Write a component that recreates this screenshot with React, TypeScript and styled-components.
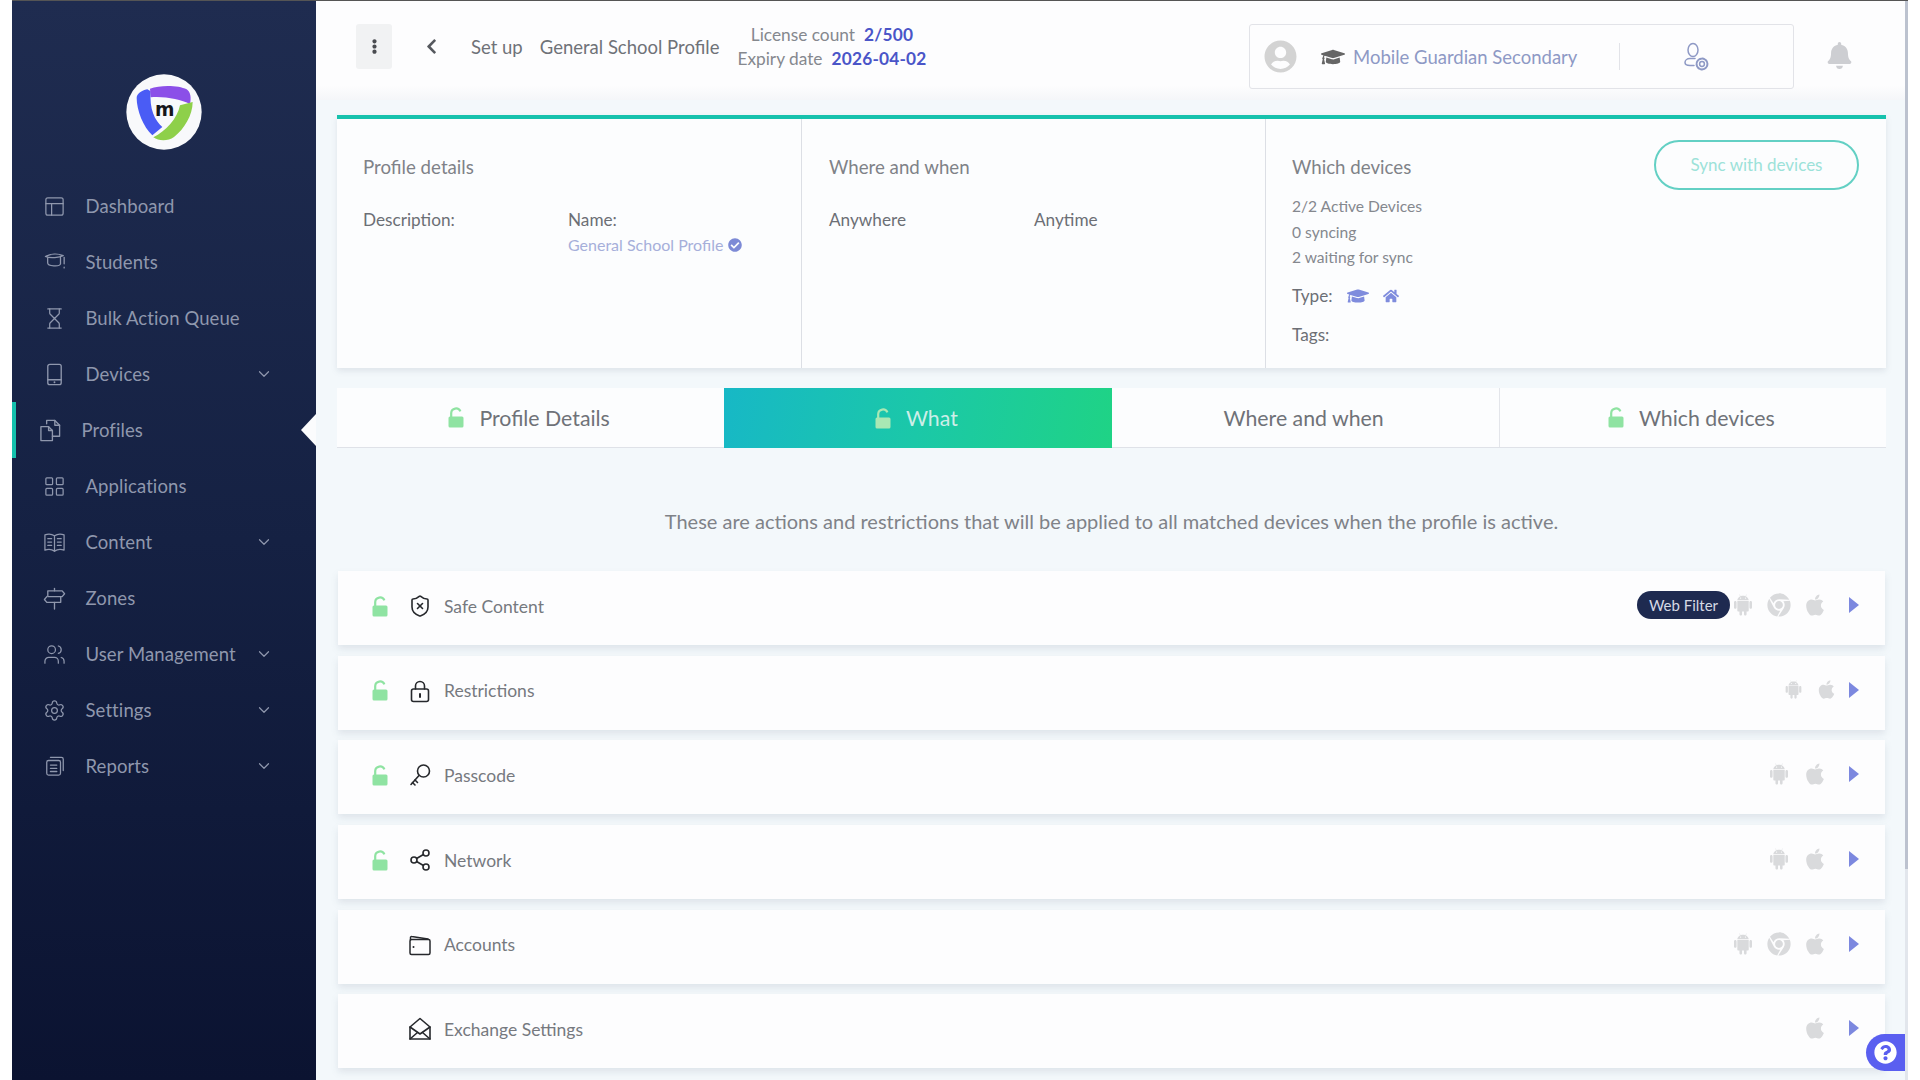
import * as React from "react";
import styled, { createGlobalStyle } from "styled-components";
import {
    ChevronDown,
    Hourglass,
    LayoutGrid,
    PanelsTopLeft,
    Settings,
    Share2,
    ShieldX,
    Users,
} from "lucide-react";
import { AiFillAndroid } from "react-icons/ai";
import {
    FaApple,
    FaBell,
    FaCheckCircle,
    FaChevronLeft,
    FaChrome,
    FaEllipsisV,
    FaGraduationCap,
    FaHome,
    FaQuestionCircle,
    FaUserCircle,
} from "react-icons/fa";

const FONT = `Lato, "Open Sans", sans-serif`;

const GlobalStyle = createGlobalStyle`
    html, body {
        margin: 0;
        height: 100%;
        background: #ffffff;
    }
    body {
        font-family: ${FONT};
        overflow: hidden;
    }
`;

const Frame = styled.div`
    display: flex;
    height: 1079px;
    margin: 0 12px;
    border-top: 1px solid #555555;
    overflow: hidden;
`;

const Sidebar = styled.nav`
    flex: 0 0 304px;
    display: flex;
    flex-direction: column;
    padding-top: 73px;
    background: linear-gradient(180deg, #1f2c50 0%, #152143 50%, #0b1331 100%);
`;

const LogoWrap = styled.div`
    display: flex;
    justify-content: center;
    height: 76px;
    margin-bottom: 28px;
`;

const NavItem = styled.div<{ $active?: boolean }>`
    position: relative;
    display: flex;
    align-items: center;
    height: 56px;
    padding-left: ${props => (props.$active ? "23px" : "31px")};
    padding-right: 43px;
    border-left: ${props => (props.$active ? "4px solid #14c1ad" : "0")};
    color: #8f97ad;
    font-size: 18.5px;
    font-weight: 400;
    letter-spacing: 0.1px;
`;

const NavIcon = styled.span`
    flex: 0 0 23px;
    display: flex;
    justify-content: center;
    margin-right: 19.5px;
`;

const NavChevron = styled.span`
    display: flex;
    margin-left: auto;
`;

const Notch = styled.span`
    position: absolute;
    right: 0;
    top: 12px;
    border-top: 16px solid transparent;
    border-bottom: 16px solid transparent;
    border-right: 15px solid #fbfcfd;
`;

const Main = styled.main`
    position: relative;
    flex: 1;
    min-width: 0;
    background: #f3f8fb;
    overflow: hidden;
`;

const ScrollThumb = styled.div`
    position: absolute;
    right: 0;
    top: 0;
    width: 3px;
    height: 868px;
    background: #bcc2cf;
`;

const ScrollTrack = styled.div`
    position: absolute;
    right: 0;
    top: 868px;
    bottom: 0;
    width: 3px;
    background: #e2e6ec;
`;

const Header = styled.header`
    display: flex;
    align-items: center;
    height: 99px;
    padding: 0 55px 8px 40px;
    box-sizing: border-box;
    background: linear-gradient(180deg, #fdfdfe 85%, #f5f6f9 100%);
    color: #6f7278;
    font-size: 18.5px;
`;

const KebabButton = styled.div`
    display: flex;
    align-items: center;
    justify-content: center;
    width: 36px;
    height: 45px;
    margin-right: 31px;
    border-radius: 3px;
    background: #f1f2f3;
    color: #4a4c50;
`;

const BackButton = styled.div`
    display: flex;
    width: 18px;
    margin-right: 30px;
    color: #55585e;
`;

const Crumb = styled.span<{ $gap: number }>`
    margin-right: ${props => props.$gap}px;
    white-space: nowrap;
`;

const LicenseBlock = styled.div`
    text-align: center;
    font-size: 17.3px;
    line-height: 24px;
    color: #85888e;
    white-space: nowrap;
`;

const LicenseValue = styled.b`
    margin-left: 9px;
    color: #4a55c8;
    font-weight: 700;
    letter-spacing: 0.2px;
`;

const OrgBox = styled.div`
    display: flex;
    align-items: center;
    width: 545px;
    height: 65px;
    margin-left: auto;
    margin-top: 20px;
    padding-left: 14px;
    box-sizing: border-box;
    border: 1px solid #e2e3e8;
    border-radius: 3px;
    color: #8e99c5;
    font-size: 18.5px;
`;

const OrgCap = styled.span`
    display: flex;
    margin-left: 24px;
    color: #666666;
`;

const OrgName = styled.span`
    margin-left: 8px;
    white-space: nowrap;
`;

const OrgDivider = styled.span`
    width: 1px;
    height: 27px;
    margin-left: 42px;
    background: #e2e3e8;
`;

const OrgGear = styled.span`
    display: flex;
    margin-left: 64px;
`;

const BellWrap = styled.div`
    display: flex;
    margin-left: 32px;
    margin-top: 17px;
    color: #cdced2;
`;

const Content = styled.div`
    padding: 15px 22px 0 21px;
`;

const SummaryCard = styled.section`
    display: grid;
    grid-template-columns: 464px 464px 1fr;
    height: 253px;
    box-sizing: border-box;
    border-top: 4px solid #16c2ad;
    background: #fcfdfe;
    box-shadow: 0 3px 6px rgba(120, 130, 150, 0.16);
`;

const SummaryColumn = styled.div<{ $inset: number; $divider?: boolean }>`
    padding: 36px 27px 0 ${props => props.$inset}px;
    border-left: ${props => (props.$divider ? "1px solid #dcdfe5" : "0")};
    font-size: 17.2px;
    line-height: 24px;
    color: #6c6f75;
`;

const SummaryHead = styled.div`
    display: flex;
    justify-content: space-between;
    align-items: flex-start;
    height: 24px;
    color: #7f8288;
    font-size: 18.7px;
`;

const DetailRow = styled.div`
    display: grid;
    grid-template-columns: 205px 1fr;
    margin-top: 29px;
`;

const ProfileName = styled.div`
    display: flex;
    align-items: center;
    gap: 5px;
    margin-top: 1px;
    color: #a6afda;
    font-size: 16px;
    svg {
        color: #7d8ad6;
    }
`;

const SyncButton = styled.div`
    display: flex;
    align-items: center;
    justify-content: center;
    width: 205px;
    height: 50px;
    margin-top: -15px;
    box-sizing: border-box;
    border: 2px solid #63d0c4;
    border-radius: 25px;
    color: #9ce2d9;
    font-size: 17px;
`;

const DeviceStats = styled.div`
    margin-top: 15px;
    color: #85888e;
    font-size: 15.6px;
    line-height: 25.5px;
`;

const MetaRow = styled.div<{ $gap: number }>`
    display: flex;
    align-items: center;
    margin-top: ${props => props.$gap}px;
    gap: 14px;
    svg {
        color: #7f8cdd;
    }
`;

const Tabs = styled.div`
    display: grid;
    grid-template-columns: repeat(4, 1fr);
    height: 60px;
    margin-top: 20px;
    background: #fcfdfe;
    border-bottom: 1px solid #dfe2e8;
    box-sizing: border-box;
`;

const Tab = styled.div<{ $active?: boolean; $divider?: boolean }>`
    display: flex;
    align-items: center;
    justify-content: center;
    gap: 15px;
    padding-right: 3px;
    border-left: ${props => (props.$divider ? "1px solid #e3e5ea" : "0")};
    background: ${props =>
        props.$active
            ? "linear-gradient(100deg, #17b8c6 0%, #1bc8a8 50%, #1fd385 100%)"
            : "transparent"};
    color: ${props => (props.$active ? "#cdeee8" : "#6f7278")};
    font-size: 21.3px;
    margin-bottom: ${props => (props.$active ? "-1px" : "0")};
`;

const Intro = styled.p`
    margin: 0;
    padding: 59px 0 36px;
    text-align: center;
    color: #7f8288;
    font-size: 20px;
    line-height: 28px;
`;

const RowList = styled.div`
    display: flex;
    flex-direction: column;
    gap: 10.7px;
    margin: 0 1px;
`;

const Row = styled.div`
    display: flex;
    align-items: center;
    flex: 0 0 74px;
    box-sizing: border-box;
    height: 74px;
    padding: 0 26px 4px 34px;
    background: #fdfdfe;
    box-shadow: 0 4px 7px rgba(120, 130, 150, 0.16);
    color: #76797f;
    font-size: 17.5px;
`;

const LockSlot = styled.span`
    flex: 0 0 16px;
    display: flex;
    justify-content: center;
`;

const RowIcon = styled.span`
    flex: 0 0 24px;
    display: flex;
    justify-content: center;
    margin: 0 12px 0 20px;
    color: #26282c;
`;

const Platforms = styled.div`
    display: flex;
    align-items: center;
    gap: 12px;
    margin-left: auto;
    margin-bottom: 2px;
    color: #d9dadc;
    svg {
        display: block;
    }
`;

const WebFilter = styled.span`
    display: flex;
    align-items: center;
    justify-content: center;
    width: 93px;
    height: 28px;
    margin-right: -11px;
    border-radius: 14px;
    background: #1e2a50;
    color: #d5d9e5;
    font-size: 15px;
`;

const Caret = styled.span<{ $compact?: boolean }>`
    width: 0;
    height: 0;
    margin-left: ${props => (props.$compact ? "0" : "10px")};
    border-top: 8px solid transparent;
    border-bottom: 8px solid transparent;
    border-left: 10px solid #7c88df;
`;

const HelpTab = styled.div`
    position: absolute;
    right: 3px;
    top: 1033px;
    display: flex;
    align-items: center;
    justify-content: center;
    width: 39px;
    height: 37px;
    box-sizing: border-box;
    border-radius: 19px 0 0 19px;
    background: #5a5ff0;
    color: #ffffff;
`;

const Logo = () => (
    <svg width="76" height="76" viewBox="6 6 228 228">
        <circle cx="120" cy="120" r="113" fill="#f8f9fb" />
        <path d="M70 52 C52 56 38 66 38 78 C38 115 58 165 85 190 L115 165 C92 145 76 112 80 58 Z" fill="#4a5cf5" />
        <path d="M78 50 C110 38 165 40 188 52 C200 60 202 78 198 96 C170 82 120 72 80 76 Z" fill="#8b4fe8" />
        <path d="M168 100 L206 90 C206 130 180 172 150 195 C132 208 105 208 88 196 C125 178 160 140 168 100 Z" fill="#8ed04a" />
        <text x="122" y="131" textAnchor="middle" fontFamily="'DejaVu Sans', sans-serif" fontWeight="700" fontSize="56" fill="#16161a">
            m
        </text>
    </svg>
);

const GreenLock = ({ light }: { light?: boolean }) => (
    <svg width="16" height="21" viewBox="0 0 16 21">
        <path d="M3.2 10 V6 a4.8 4.8 0 0 1 9.2 -1.6" fill="none" stroke={light ? "#a9e8b4" : "#8fe3a2"} strokeWidth="2.2" />
        <rect x="0.5" y="9.5" width="15" height="11" rx="1.5" fill={light ? "#a9e8b4" : "#8fe3a2"} />
    </svg>
);

const iconProps = {
    fill: "none",
    stroke: "currentColor",
    strokeLinecap: "round" as const,
    strokeLinejoin: "round" as const,
};

const CapOutline = () => (
    <svg width="22" height="22" viewBox="0 0 24 24" strokeWidth="1.4" {...iconProps}>
        <path d="M1.5 6 C7 3 15 2.5 21 5 C17 7 7 8.5 1.5 6 Z" />
        <path d="M4 7.5 V13 C4 16.5 17 17.5 18 14 V7" />
        <path d="M22 7 V14" />
        <path d="M22 17.5 v1" />
    </svg>
);

const TabletIcon = () => (
    <svg width="23" height="23" viewBox="0 0 24 24" strokeWidth="1.4" {...iconProps}>
        <rect x="5" y="1.5" width="14" height="21" rx="2" />
        <path d="M5 17.5 H19" />
        <path d="M12 20 v0.1" strokeWidth="2" />
    </svg>
);

const ProfilesIcon = () => (
    <svg width="23" height="23" viewBox="0 0 24 24" strokeWidth="1.4" {...iconProps}>
        <path d="M2 8 H10 L14 12 V22.5 H2 Z" />
        <path d="M10 8 V12 H14" />
        <path d="M8 5 V1.5 H16.5 L21.5 6.5 V18 H14" />
        <path d="M16.5 1.5 V6.5 H21.5" />
    </svg>
);

const BookIcon = () => (
    <svg width="23" height="23" viewBox="0 0 24 24" strokeWidth="1.3" {...iconProps}>
        <path d="M12 5 C9 3 5 3 2 4 V20 C5 19 9 19 12 21 C15 19 19 19 22 20 V4 C19 3 15 3 12 5 Z" />
        <path d="M12 5 V21" />
        <path d="M5 8 H9 M5 11.5 H9 M5 15 H9 M15 8 H19 M15 11.5 H19 M15 15 H19" />
    </svg>
);

const ZonesIcon = () => (
    <svg width="23" height="23" viewBox="0 0 24 24" strokeWidth="1.4" {...iconProps}>
        <path d="M12 1.5 V4" />
        <path d="M5 4 H20 L22.5 7 L20 10 H5 Z" />
        <path d="M18.5 10 V16 H4 L1.5 13 L4 10" />
        <path d="M12 16 V23" />
    </svg>
);

const ReportIcon = () => (
    <svg width="22" height="22" viewBox="0 0 24 24" strokeWidth="1.4" {...iconProps}>
        <rect x="3" y="6" width="15" height="16" rx="2" />
        <path d="M7 2.5 H19 a2 2 0 0 1 2 2 V17" />
        <path d="M7 11 H14 M7 14.5 H14 M7 18 H14" />
    </svg>
);

const PadlockIcon = () => (
    <svg width="24" height="24" viewBox="0 0 24 24" strokeWidth="1.6" {...iconProps}>
        <rect x="3.5" y="10" width="17" height="12.5" rx="2" />
        <path d="M7.5 10 V7 a4.5 4.5 0 0 1 9 0 V10" />
        <path d="M12 15 v3" strokeWidth="2" />
    </svg>
);

const KeyIcon = () => (
    <svg width="24" height="24" viewBox="0 0 24 24" strokeWidth="1.6" {...iconProps}>
        <circle cx="15.5" cy="8" r="6" />
        <path d="M11 12.5 L3 21.5" />
        <path d="M7 17 L9.5 19.5 M4.5 19.5 L7 22" />
    </svg>
);

const WalletIcon = () => (
    <svg width="24" height="24" viewBox="0 0 24 24" strokeWidth="1.5" {...iconProps}>
        <rect x="2" y="6.5" width="20" height="15" rx="1.5" />
        <path d="M2.5 7 V4.5 a1 1 0 0 1 1.2 -1 L20 6" />
        <path d="M5.5 14 v0.1" strokeWidth="2" />
    </svg>
);

const ExchangeIcon = () => (
    <svg width="24" height="24" viewBox="0 0 24 24" strokeWidth="1.6" {...iconProps}>
        <path d="M2 10 L12 1.5 L22 10 V22 H2 Z" />
        <path d="M2 10 L12 17 L22 10" />
        <path d="M2 22 L9.5 15.5 M22 22 L14.5 15.5" />
    </svg>
);

const UserGearIcon = () => (
    <svg width="26" height="30" viewBox="0 0 26 30" strokeWidth="1.5" {...iconProps}>
        <ellipse cx="9" cy="8" rx="5" ry="6.5" />
        <path d="M11 16.5 H6 C3 16.5 1 18.5 1 20.5 C1 22.5 3 23.5 6 23.5 H10" />
        <circle cx="18" cy="22" r="2.4" />
        <circle cx="18" cy="22" r="5.4" strokeDasharray="2.4 1.2" strokeWidth="2" />
    </svg>
);

const sideIcon = { size: 23, strokeWidth: 1.3 };

const NAV_ITEMS = [
    { label: "Dashboard", icon: <PanelsTopLeft {...sideIcon} /> },
    { label: "Students", icon: <CapOutline /> },
    { label: "Bulk Action Queue", icon: <Hourglass {...sideIcon} /> },
    { label: "Devices", icon: <TabletIcon />, sub: true },
    { label: "Profiles", icon: <ProfilesIcon />, active: true },
    { label: "Applications", icon: <LayoutGrid {...sideIcon} /> },
    { label: "Content", icon: <BookIcon />, sub: true },
    { label: "Zones", icon: <ZonesIcon /> },
    { label: "User Management", icon: <Users {...sideIcon} />, sub: true },
    { label: "Settings", icon: <Settings {...sideIcon} />, sub: true },
    { label: "Reports", icon: <ReportIcon />, sub: true },
];

const ROWS = [
    { label: "Safe Content", icon: <ShieldX size={24} strokeWidth={1.6} />, locked: true, pill: true, android: 24, chrome: true, apple: 24 },
    { label: "Restrictions", icon: <PadlockIcon />, locked: true, android: 21, apple: 21, compact: true },
    { label: "Passcode", icon: <KeyIcon />, locked: true, android: 24, apple: 24 },
    { label: "Network", icon: <Share2 size={24} strokeWidth={1.6} />, locked: true, android: 24, apple: 24 },
    { label: "Accounts", icon: <WalletIcon />, android: 24, chrome: true, apple: 24 },
    { label: "Exchange Settings", icon: <ExchangeIcon />, apple: 24 },
];

export default function App() {
    return (
        <>
            <GlobalStyle />
            <Frame>
                <Sidebar>
                    <LogoWrap>
                        <Logo />
                    </LogoWrap>
                    {NAV_ITEMS.map(item => (
                        <NavItem key={item.label} $active={item.active}>
                            <NavIcon>{item.icon}</NavIcon>
                            {item.label}
                            {item.sub && (
                                <NavChevron>
                                    <ChevronDown size={18} strokeWidth={1.6} />
                                </NavChevron>
                            )}
                            {item.active && <Notch />}
                        </NavItem>
                    ))}
                </Sidebar>
                <Main>
                    <Header>
                        <KebabButton>
                            <FaEllipsisV size={15} />
                        </KebabButton>
                        <BackButton>
                            <FaChevronLeft size={17} />
                        </BackButton>
                        <Crumb $gap={17}>Set up</Crumb>
                        <Crumb $gap={18}>General School Profile</Crumb>
                        <LicenseBlock>
                            <div>
                                License count<LicenseValue>2/500</LicenseValue>
                            </div>
                            <div>
                                Expiry date<LicenseValue>2026-04-02</LicenseValue>
                            </div>
                        </LicenseBlock>
                        <OrgBox>
                            <FaUserCircle size={33} color="#d3d3d3" />
                            <OrgCap>
                                <FaGraduationCap size={24} />
                            </OrgCap>
                            <OrgName>Mobile Guardian Secondary</OrgName>
                            <OrgDivider />
                            <OrgGear>
                                <UserGearIcon />
                            </OrgGear>
                        </OrgBox>
                        <BellWrap>
                            <FaBell size={27} />
                        </BellWrap>
                    </Header>
                    <Content>
                        <SummaryCard>
                            <SummaryColumn $inset={26}>
                                <SummaryHead>Profile details</SummaryHead>
                                <DetailRow>
                                    <div>Description:</div>
                                    <div>
                                        Name:
                                        <ProfileName>
                                            General School Profile
                                            <FaCheckCircle size={14} />
                                        </ProfileName>
                                    </div>
                                </DetailRow>
                            </SummaryColumn>
                            <SummaryColumn $inset={27} $divider>
                                <SummaryHead>Where and when</SummaryHead>
                                <DetailRow>
                                    <div>Anywhere</div>
                                    <div>Anytime</div>
                                </DetailRow>
                            </SummaryColumn>
                            <SummaryColumn $inset={26} $divider>
                                <SummaryHead>
                                    Which devices
                                    <SyncButton>Sync with devices</SyncButton>
                                </SummaryHead>
                                <DeviceStats>
                                    <div>2/2 Active Devices</div>
                                    <div>0 syncing</div>
                                    <div>2 waiting for sync</div>
                                </DeviceStats>
                                <MetaRow $gap={13}>
                                    Type:
                                    <FaGraduationCap size={22} />
                                    <FaHome size={16} />
                                </MetaRow>
                                <MetaRow $gap={15}>Tags:</MetaRow>
                            </SummaryColumn>
                        </SummaryCard>
                        <Tabs>
                            <Tab>
                                <GreenLock />
                                Profile Details
                            </Tab>
                            <Tab $active>
                                <GreenLock light />
                                What
                            </Tab>
                            <Tab>Where and when</Tab>
                            <Tab $divider>
                                <GreenLock />
                                Which devices
                            </Tab>
                        </Tabs>
                        <Intro>
                            These are actions and restrictions that will be applied to all matched devices when the profile is active.
                        </Intro>
                        <RowList>
                            {ROWS.map(row => (
                                <Row key={row.label}>
                                    <LockSlot>{row.locked && <GreenLock />}</LockSlot>
                                    <RowIcon>{row.icon}</RowIcon>
                                    {row.label}
                                    <Platforms>
                                        {row.pill && <WebFilter>Web Filter</WebFilter>}
                                        {row.android && <AiFillAndroid size={row.android} />}
                                        {row.chrome && <FaChrome size={24} />}
                                        {row.apple && <FaApple size={row.apple} />}
                                        <Caret $compact={row.compact} />
                                    </Platforms>
                                </Row>
                            ))}
                        </RowList>
                    </Content>
                    <ScrollThumb />
                    <ScrollTrack />
                    <HelpTab>
                        <FaQuestionCircle size={23} />
                    </HelpTab>
                </Main>
            </Frame>
        </>
    );
}
